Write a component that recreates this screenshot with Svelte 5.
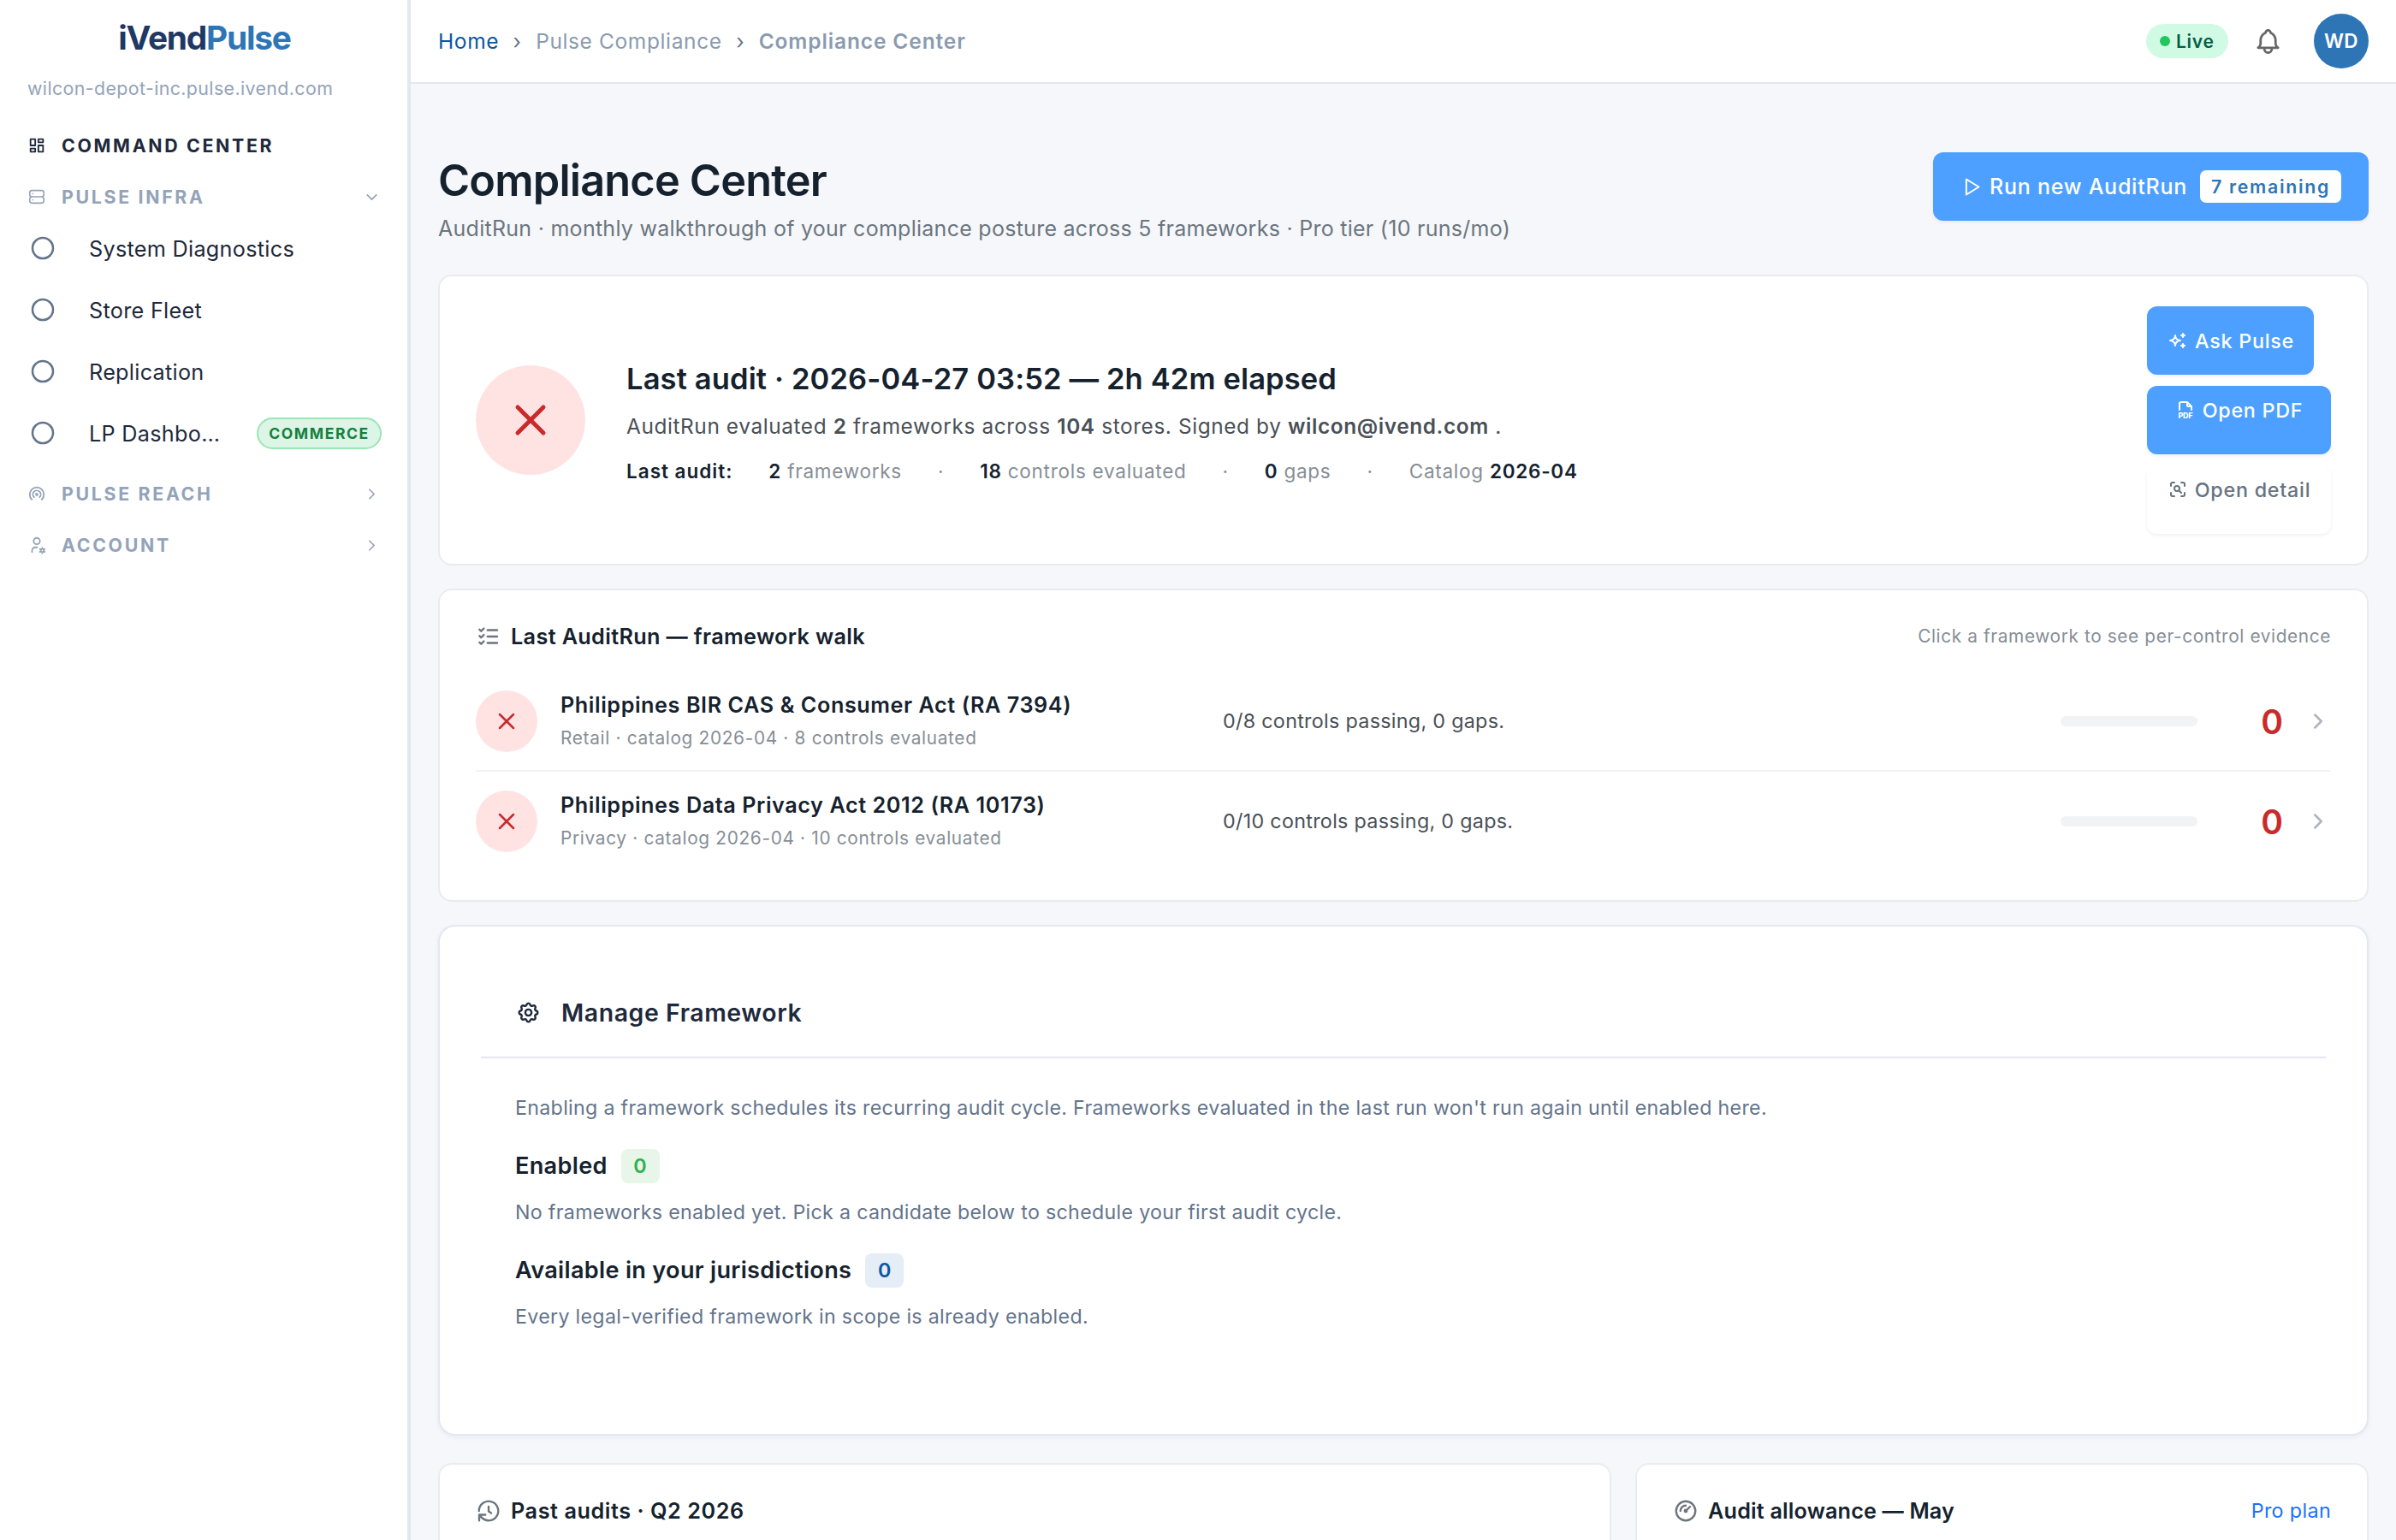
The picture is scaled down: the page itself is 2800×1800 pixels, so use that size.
<!--
  App.svelte
  Compliance Center screen: sidebar navigation, top bar, last audit summary,
  framework walk, framework management and the audit history / allowance cards.
-->
<script lang="ts">
  interface NavItem {
    label: string;
    badge?: string;
  }

  interface Framework {
    name: string;
    meta: string;
    summary: string;
    percent: number;
  }

  const navItems: NavItem[] = [
    { label: 'System Diagnostics' },
    { label: 'Store Fleet' },
    { label: 'Replication' },
    { label: 'LP Dashbo…', badge: 'Commerce' }
  ];

  const frameworks: Framework[] = [
    {
      name: 'Philippines BIR CAS & Consumer Act (RA 7394)',
      meta: 'Retail · catalog 2026-04 · 8 controls evaluated',
      summary: '0/8 controls passing, 0 gaps.',
      percent: 0
    },
    {
      name: 'Philippines Data Privacy Act 2012 (RA 10173)',
      meta: 'Privacy · catalog 2026-04 · 10 controls evaluated',
      summary: '0/10 controls passing, 0 gaps.',
      percent: 0
    }
  ];

  // ── Outline icons, 24×24 grid ────────────────────────────────────────────
  const icons = {
    dashboard: 'M4 4h6v8h-6zM4 16h6v4h-6zM14 12h6v8h-6zM14 4h6v4h-6z',
    server:
      'M6 4h12a3 3 0 0 1 3 3v2a3 3 0 0 1 -3 3h-12a3 3 0 0 1 -3 -3v-2a3 3 0 0 1 3 -3zM6 12h12a3 3 0 0 1 3 3v2a3 3 0 0 1 -3 3h-12a3 3 0 0 1 -3 -3v-2a3 3 0 0 1 3 -3zM7 8v.01M7 16v.01',
    broadcast:
      'M18.364 19.364a9 9 0 1 0 -12.728 0M15.536 16.536a5 5 0 1 0 -7.072 0M11 13a1 1 0 1 0 2 0a1 1 0 1 0 -2 0',
    userCog:
      'M8 7a4 4 0 1 0 8 0a4 4 0 0 0 -8 0M6 21v-2a4 4 0 0 1 4 -4h2.5M17 19a2 2 0 1 0 4 0a2 2 0 1 0 -4 0M19 15.5v1.5M19 21v1.5M22.03 17.25l-1.3 .75M17.27 20l-1.3 .75M15.97 17.25l1.3 .75M20.73 20l1.3 .75',
    circle: 'M3 12a9 9 0 1 0 18 0a9 9 0 1 0 -18 0',
    chevronDown: 'M6 9l6 6l6 -6',
    chevronRight: 'M9 6l6 6l-6 6',
    bell: 'M10 5a2 2 0 1 1 4 0a7 7 0 0 1 4 6v3a4 4 0 0 0 2 3h-16a4 4 0 0 0 2 -3v-3a7 7 0 0 1 4 -6M9 17v1a3 3 0 0 0 6 0v-1',
    play: 'M7 4v16l13 -8z',
    x: 'M18 6l-12 12M6 6l12 12',
    sparkles:
      'M16 18a2 2 0 0 1 2 2a2 2 0 0 1 2 -2a2 2 0 0 1 -2 -2a2 2 0 0 1 -2 2zM16 6a2 2 0 0 1 2 2a2 2 0 0 1 2 -2a2 2 0 0 1 -2 -2a2 2 0 0 1 -2 2zM9 18a6 6 0 0 1 6 -6a6 6 0 0 1 -6 -6a6 6 0 0 1 -6 6a6 6 0 0 1 6 6z',
    file: 'M14 3v4a1 1 0 0 0 1 1h4M5 12v-7a2 2 0 0 1 2 -2h7l5 5v4',
    zoomScan:
      'M4 8v-2a2 2 0 0 1 2 -2h2M4 16v2a2 2 0 0 0 2 2h2M16 4h2a2 2 0 0 1 2 2v2M16 20h2a2 2 0 0 0 2 -2v-2M8 11a3 3 0 1 0 6 0a3 3 0 1 0 -6 0M16 16l-2.5 -2.5',
    listCheck:
      'M3.5 5.5l1.5 1.5l2.5 -2.5M3.5 11.5l1.5 1.5l2.5 -2.5M3.5 17.5l1.5 1.5l2.5 -2.5M11 6h9M11 12h9M11 18h9',
    settings:
      'M10.325 4.317c.426 -1.756 2.924 -1.756 3.35 0a1.724 1.724 0 0 0 2.573 1.066c1.543 -.94 3.31 .826 2.37 2.37a1.724 1.724 0 0 0 1.065 2.572c1.756 .426 1.756 2.924 0 3.35a1.724 1.724 0 0 0 -1.066 2.573c.94 1.543 -.826 3.31 -2.37 2.37a1.724 1.724 0 0 0 -2.572 1.065c-.426 1.756 -2.924 1.756 -3.35 0a1.724 1.724 0 0 0 -2.573 -1.066c-1.543 .94 -3.31 -.826 -2.37 -2.37a1.724 1.724 0 0 0 -1.065 -2.572c-1.756 -.426 -1.756 -2.924 0 -3.35a1.724 1.724 0 0 0 1.066 -2.573c-.94 -1.543 .826 -3.31 2.37 -2.37c1 .608 2.296 .07 2.572 -1.065zM9 12a3 3 0 1 0 6 0a3 3 0 0 0 -6 0',
    history: 'M3 12a9 9 0 1 1 2.6 6.3l-2.1 -2.3M3.2 21v-5.4h5.8M12 8v4.4l2.4 1.6',
    gauge:
      'M3 12a9 9 0 1 0 18 0a9 9 0 1 0 -18 0M11 12a1 1 0 1 0 2 0a1 1 0 1 0 -2 0M13.41 10.59l2.59 -2.59M7 12a5 5 0 0 1 5 -5'
  };
</script>

{#snippet icon(path: string, size: number, stroke = 2)}
  <svg class="icon" width={size} height={size} viewBox="0 0 24 24" stroke-width={stroke} aria-hidden="true">
    <path d={path} />
  </svg>
{/snippet}

<div class="app">
  <!-- Sidebar -->
  <aside class="sidebar">
    <div class="logo">iVend<span>Pulse</span></div>
    <div class="tenant">wilcon-depot-inc.pulse.ivend.com</div>

    <nav>
      <div class="nav-head current">
        {@render icon(icons.dashboard, 22)}
        <span>Command Center</span>
      </div>
      <div class="nav-head">
        {@render icon(icons.server, 22, 1.75)}
        <span>Pulse Infra</span>
        {@render icon(icons.chevronDown, 21)}
      </div>
      <ul class="nav-list">
        {#each navItems as item}
          <li>
            {@render icon(icons.circle, 32, 1.9)}
            <span>{item.label}</span>
            {#if item.badge}
              <em class="badge">{item.badge}</em>
            {/if}
          </li>
        {/each}
      </ul>
      <div class="nav-head">
        {@render icon(icons.broadcast, 22)}
        <span>Pulse Reach</span>
        {@render icon(icons.chevronRight, 21)}
      </div>
      <div class="nav-head">
        {@render icon(icons.userCog, 22)}
        <span>Account</span>
        {@render icon(icons.chevronRight, 21)}
      </div>
    </nav>
  </aside>

  <div class="main">
    <!-- Top bar -->
    <header class="topbar">
      <div class="crumbs">
        <a href="#home">Home</a>
        <i>›</i>
        <span>Pulse Compliance</span>
        <i>›</i>
        <b>Compliance Center</b>
      </div>
      <div class="live"><span class="dot"></span>Live</div>
      <div class="bell">{@render icon(icons.bell, 35, 1.9)}</div>
      <div class="avatar">WD</div>
    </header>

    <main class="content">
      <div class="page-head">
        <div>
          <h1>Compliance Center</h1>
          <p>AuditRun · monthly walkthrough of your compliance posture across 5 frameworks · Pro tier (10 runs/mo)</p>
        </div>
        <button type="button" class="btn run">
          {@render icon(icons.play, 27, 1.75)}
          <span>Run new AuditRun</span>
          <span class="remaining">7 remaining</span>
        </button>
      </div>

      <!-- Last audit summary -->
      <section class="card summary">
        <div class="status large">{@render icon(icons.x, 60, 2)}</div>
        <div class="summary-text">
          <h2>Last audit · 2026-04-27 03:52 — 2h 42m elapsed</h2>
          <p>
            AuditRun evaluated <b>2</b> frameworks across <b>104</b> stores. Signed by
            <b>wilcon@ivend.com</b> .
          </p>
          <div class="stats">
            <b>Last audit:</b>
            <span><b>2</b> frameworks</span>
            <span>·</span>
            <span><b>18</b> controls evaluated</span>
            <span>·</span>
            <span><b>0</b> gaps</span>
            <span>·</span>
            <span>Catalog <b>2026-04</b></span>
          </div>
        </div>
        <div class="actions">
          <button type="button" class="btn ask">
            {@render icon(icons.sparkles, 24)}
            <span>Ask Pulse</span>
          </button>
          <button type="button" class="btn pdf">
            <svg class="icon" width="24" height="24" viewBox="0 0 24 24" stroke-width="2" aria-hidden="true">
              <path d={icons.file} />
              <text x="3.4" y="22.2">PDF</text>
            </svg>
            <span>Open PDF</span>
          </button>
          <button type="button" class="btn detail">
            {@render icon(icons.zoomScan, 24)}
            <span>Open detail</span>
          </button>
        </div>
      </section>

      <!-- Framework walk -->
      <section class="card walk">
        <div class="card-head">
          {@render icon(icons.listCheck, 30, 1.9)}
          <h3>Last AuditRun — framework walk</h3>
          <small>Click a framework to see per-control evidence</small>
        </div>
        {#each frameworks as fw}
          <div class="fw-row">
            <div class="status">{@render icon(icons.x, 32, 1.9)}</div>
            <div class="fw-name">
              <b>{fw.name}</b>
              <small>{fw.meta}</small>
            </div>
            <div class="fw-summary">{fw.summary}</div>
            <div class="bar"><div style="width: {fw.percent}%"></div></div>
            <div class="score">{fw.percent}</div>
            <div class="go">{@render icon(icons.chevronRight, 30, 2)}</div>
          </div>
        {/each}
      </section>

      <!-- Manage framework -->
      <section class="card manage">
        <div class="manage-head">
          {@render icon(icons.settings, 29)}
          <h3>Manage Framework</h3>
        </div>
        <div class="manage-body">
          <p>
            Enabling a framework schedules its recurring audit cycle. Frameworks evaluated in the last run won't run
            again until enabled here.
          </p>
          <h4>Enabled <span class="count green">0</span></h4>
          <p>No frameworks enabled yet. Pick a candidate below to schedule your first audit cycle.</p>
          <h4>Available in your jurisdictions <span class="count blue">0</span></h4>
          <p>Every legal-verified framework in scope is already enabled.</p>
        </div>
      </section>

      <!-- History and allowance -->
      <div class="bottom">
        <section class="card">
          <div class="card-head past">
            {@render icon(icons.history, 30, 1.9)}
            <h3>Past audits · Q2 2026</h3>
          </div>
        </section>
        <section class="card">
          <div class="card-head allowance">
            {@render icon(icons.gauge, 30, 1.9)}
            <h3>Audit allowance — May</h3>
            <a href="#plan">Pro plan</a>
          </div>
        </section>
      </div>
    </main>
  </div>
</div>

<style>
  :global(body) {
    margin: 0;
    background: #f5f7fb;
  }

  .app {
    display: flex;
    height: 1800px;
    overflow: hidden;
    font-family: Inter, 'Liberation Sans', sans-serif;
    color: #15222e;
  }

  h1,
  h2,
  h3,
  h4,
  p,
  ul {
    margin: 0;
    padding: 0;
    font-weight: 400;
  }

  b,
  h1,
  h2,
  h3,
  h4 {
    font-weight: 600;
  }

  a {
    text-decoration: none;
  }

  .icon {
    display: block;
    flex: none;
    fill: none;
    stroke: currentColor;
    stroke-linecap: round;
    stroke-linejoin: round;
  }

  /* ── Sidebar ────────────────────────────────────────────────────────── */
  .sidebar {
    box-sizing: border-box;
    flex: none;
    width: 480px;
    padding: 14px 30px 0 32px;
    border-right: 4px solid #e2e8f0;
    background: #fff;
  }

  .logo {
    font-size: 38.8px;
    font-weight: 700;
    line-height: 60px;
    letter-spacing: -1.2px;
    text-align: center;
    color: #1f3864;
  }

  .logo span {
    color: #2e75b6;
  }

  .tenant {
    margin-top: 11px;
    font-size: 21.3px;
    line-height: 36px;
    letter-spacing: 0.42px;
    color: #94a3b8;
  }

  .nav-head {
    display: flex;
    align-items: center;
    gap: 18px;
    height: 48px;
    margin-top: 12px;
    padding-right: 1px;
    font-size: 21.3px;
    font-weight: 700;
    letter-spacing: 2.7px;
    text-transform: uppercase;
    color: #94a3b8;
  }

  .nav-head span {
    flex: 1;
  }

  .nav-head.current {
    margin-top: 25px;
    color: #1e293b;
  }

  .nav-list {
    margin-bottom: -1px;
    list-style: none;
  }

  .nav-list li {
    display: flex;
    align-items: center;
    height: 72px;
    padding-left: 2px;
    font-size: 25.2px;
    letter-spacing: 0.3px;
    color: #1e293b;
  }

  .nav-list .icon {
    margin-right: 38px;
    color: #64748b;
  }

  .nav-list span {
    flex: 1;
    padding-top: 2px;
  }

  .badge {
    box-sizing: border-box;
    width: 146px;
    border: 2px solid #9ae6b4;
    border-radius: 19px;
    background: #dcf5e7;
    font-size: 17.5px;
    font-style: normal;
    font-weight: 700;
    line-height: 33px;
    letter-spacing: 1.6px;
    text-align: center;
    text-transform: uppercase;
    color: #15803d;
  }

  /* ── Top bar ────────────────────────────────────────────────────────── */
  .main {
    flex: 1;
    min-width: 0;
  }

  .topbar {
    display: flex;
    align-items: center;
    height: 96px;
    padding: 0 32px;
    border-bottom: 2px solid #e2e8f0;
    background: #fff;
  }

  .crumbs {
    display: flex;
    flex: 1;
    font-size: 24.5px;
    letter-spacing: 0.62px;
    color: #8a9bb0;
  }

  .crumbs a {
    color: #0b57a4;
  }

  .crumbs b {
    letter-spacing: 0.87px;
  }

  .crumbs i {
    width: 43px;
    font-style: normal;
    text-align: center;
    color: #64748b;
  }

  .live {
    display: flex;
    align-items: center;
    box-sizing: border-box;
    width: 96px;
    height: 40px;
    padding-left: 16px;
    border-radius: 20px;
    background: #d1fae5;
    font-size: 21px;
    font-weight: 600;
    letter-spacing: 0.7px;
    color: #065f46;
  }

  .dot {
    width: 12px;
    height: 12px;
    margin-right: 7px;
    border-radius: 50%;
    background: #22c55e;
  }

  .bell {
    margin: 0 36px 0 29px;
    color: #666;
  }

  .avatar {
    width: 64px;
    border-radius: 50%;
    background: #2e75b6;
    font-size: 22.5px;
    font-weight: 600;
    line-height: 64px;
    letter-spacing: 0.5px;
    text-align: center;
    color: #fff;
  }

  /* ── Page head ──────────────────────────────────────────────────────── */
  .content {
    padding: 80px 32px 0;
  }

  .page-head {
    display: flex;
    align-items: flex-start;
    justify-content: space-between;
    height: 143px;
  }

  h1 {
    margin: 2px 0 7px;
    font-size: 50.4px;
    line-height: 62px;
    letter-spacing: -0.8px;
  }

  .page-head p {
    font-size: 25px;
    line-height: 36px;
    letter-spacing: 0.27px;
    color: #6c757d;
  }

  .btn {
    display: flex;
    align-items: center;
    box-sizing: border-box;
    height: 80px;
    padding: 0 24px;
    border: 0;
    border-radius: 12px;
    background: #4da0ff;
    box-shadow: 0 2px 4px rgba(0, 0, 0, 0.06);
    font-family: inherit;
    font-size: 23.3px;
    font-weight: 500;
    letter-spacing: 0.75px;
    white-space: nowrap;
    color: #fff;
  }

  .btn .icon {
    margin-right: 8px;
  }

  .run {
    width: 509px;
    padding: 0 32px 0 31px;
    font-size: 25px;
  }

  .ask {
    width: 195px;
  }

  .remaining {
    width: 165px;
    margin-left: auto;
    border-radius: 7px;
    background: #fff;
    font-size: 21.3px;
    font-weight: 600;
    line-height: 38px;
    letter-spacing: 1.7px;
    text-align: center;
    color: #2e75b6;
  }

  /* ── Cards ──────────────────────────────────────────────────────────── */
  .card {
    box-sizing: border-box;
    padding: 35px 42px;
    border: 2px solid #e9ecef;
    border-radius: 16px;
    background: #fff;
  }

  .card-head {
    display: flex;
    align-items: center;
    height: 38px;
    color: #6c757d;
  }

  .card-head h3 {
    flex: 1;
    margin-left: 11px;
    font-size: 25.2px;
    letter-spacing: 0.37px;
    color: #15222e;
  }

  .card-head.past h3 {
    letter-spacing: 0.57px;
  }

  .card-head.allowance h3 {
    letter-spacing: 0.17px;
  }

  .card-head small {
    font-size: 20.8px;
    line-height: 36px;
    letter-spacing: 0.62px;
    color: #868e96;
  }

  .card-head a {
    font-size: 23.3px;
    line-height: 36px;
    letter-spacing: 0.35px;
    color: #1971ff;
  }

  .status {
    display: flex;
    align-items: center;
    justify-content: center;
    flex: none;
    width: 72px;
    height: 72px;
    border-radius: 50%;
    background: #ffe3e3;
    color: #c92a2a;
  }

  .status.large {
    width: 128px;
    height: 128px;
  }

  /* ── Last audit summary ─────────────────────────────────────────────── */
  .summary {
    display: flex;
    align-items: center;
    height: 340px;
  }

  .summary-text {
    flex: 1;
    margin-left: 48px;
    padding-top: 7px;
  }

  .summary h2 {
    font-size: 34.5px;
    line-height: 48px;
    letter-spacing: 0.13px;
  }

  .summary p {
    margin-top: 9px;
    font-size: 24.4px;
    line-height: 44px;
    letter-spacing: 0.6px;
    color: #495057;
  }

  .stats {
    display: flex;
    gap: 42px;
    margin-top: 11px;
    font-size: 22.5px;
    line-height: 40px;
    letter-spacing: 0.74px;
    color: #868e96;
  }

  .stats b {
    color: #15222e;
  }

  .stats > b {
    letter-spacing: 1px;
  }

  .actions {
    display: flex;
    flex-direction: column;
    align-items: flex-start;
    gap: 13px;
    width: 215px;
  }

  .pdf,
  .detail {
    align-items: flex-start;
    justify-content: center;
    width: 215px;
    padding: 9px 0 0;
    line-height: 40px;
  }

  .pdf .icon,
  .detail .icon {
    margin-top: 7px;
  }

  .pdf text {
    fill: currentColor;
    stroke: none;
    font-size: 9px;
    font-weight: 800;
    letter-spacing: -0.2px;
  }

  .btn.detail {
    background: #fff;
    color: #667382;
  }

  /* ── Framework walk ─────────────────────────────────────────────────── */
  .walk {
    height: 366px;
    margin-top: 27px;
  }

  .walk .card-head {
    margin-bottom: 22px;
  }

  .fw-row {
    display: flex;
    align-items: center;
    height: 115px;
  }

  .fw-row + .fw-row {
    border-top: 2px solid #f1f3f5;
  }

  .fw-name {
    width: 774px;
    margin-left: 27px;
  }

  .fw-name b,
  .fw-name small {
    display: block;
  }

  .fw-name b {
    font-size: 25.2px;
    line-height: 40px;
    letter-spacing: 0.58px;
  }

  .fw-name small {
    font-size: 20.8px;
    line-height: 37px;
    letter-spacing: 0.68px;
    color: #868e96;
  }

  .fw-summary {
    flex: 1;
    font-size: 23.3px;
    letter-spacing: 0.3px;
    color: #495057;
  }

  .bar {
    width: 160px;
    height: 12px;
    border-radius: 6px;
    background: #f1f3f5;
    overflow: hidden;
  }

  .bar div {
    height: 100%;
    background: #c92a2a;
  }

  .score {
    width: 100px;
    margin-right: 26px;
    padding-top: 1px;
    font-size: 39px;
    font-weight: 600;
    text-align: right;
    color: #c92a2a;
  }

  .go {
    color: #adb5bd;
  }

  /* ── Manage framework ───────────────────────────────────────────────── */
  .manage {
    height: 597px;
    margin-top: 27px;
    padding: 50px 48px 0;
    border-color: #e2e8f0;
    border-radius: 20px;
    box-shadow: 0 2px 6px rgba(15, 23, 42, 0.05);
  }

  .manage-head {
    display: flex;
    align-items: center;
    box-sizing: border-box;
    height: 104px;
    padding: 0 0 2px 41px;
    border-bottom: 2px solid #e2e8f0;
    color: #1e293b;
  }

  .manage-head h3 {
    margin-left: 24px;
    font-size: 28.4px;
    letter-spacing: 0.6px;
  }

  .manage-body {
    padding: 39.5px 40px 0;
  }

  .manage-body p {
    font-size: 23.2px;
    line-height: 36px;
    letter-spacing: 0.32px;
    color: #64748b;
  }

  .manage-body h4 {
    display: flex;
    align-items: center;
    margin: 30.5px 0 15.5px;
    font-size: 27.1px;
    line-height: 40px;
    letter-spacing: 0.32px;
  }

  .count {
    width: 45px;
    margin-left: 16px;
    border-radius: 8px;
    font-size: 23.3px;
    text-align: center;
  }

  .green {
    background: #e8f5e9;
    color: #2bb24c;
  }

  .blue {
    background: #e5edf6;
    color: #0b57a4;
  }

  /* ── History and allowance ──────────────────────────────────────────── */
  .bottom {
    display: grid;
    grid-template-columns: 1.6fr 1fr;
    gap: 28px;
    margin-top: 32px;
  }

  .bottom .card {
    height: 400px;
  }
</style>
